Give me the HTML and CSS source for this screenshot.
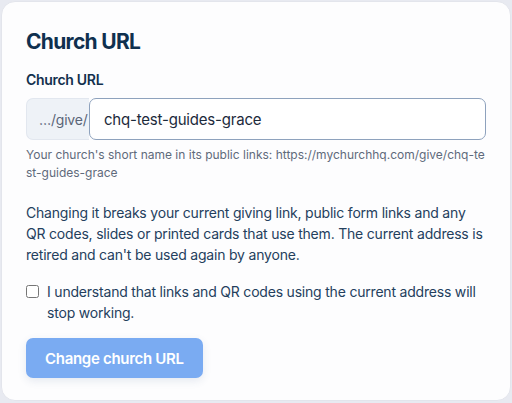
FILE: index.html
```html
<!DOCTYPE html>
<html lang="en">
<head>
<meta charset="utf-8">
<title>Church URL</title>
<link rel="stylesheet" href="styles.css">
</head>
<body>
<section class="card">
  <h2 class="title">Church URL</h2>
  <label class="label" for="slug">Church URL</label>
  <div class="group">
    <span class="prefix">…/give/</span>
    <input id="slug" class="input" type="text" value="chq-test-guides-grace">
  </div>
  <p class="help">Your church's short name in its public links: https://mychurchhq.com/give/chq-test-guides-grace</p>
  <p class="warn">Changing it breaks your current giving link, public form links and any QR codes, slides or printed cards that use them. The current address is retired and can't be used again by anyone.</p>
  <label class="confirm">
    <input type="checkbox" class="check">
    <span>I understand that links and QR codes using the current address will stop working.</span>
  </label>
  <button class="btn" type="button" disabled>Change church URL</button>
</section>
</body>
</html>
```

FILE: styles.css
```css
* { box-sizing: border-box; }
html, body { margin: 0; }
body {
  background: #e8eaf1;
  padding: 1px 1px 0 1px;
  font-family: Inter, "Noto Sans", sans-serif;
  color: #16324f;
}
.card {
  width: 510px;
  height: 400px;
  background: #fdfdfe;
  border: 1px solid #e3e5ec;
  border-radius: 14px;
  padding: 26px 22px 24px 24px;
}
.title {
  margin: 0;
  font-size: 21px;
  line-height: 28px;
  font-weight: 700;
  letter-spacing: -0.7px;
  color: #0f304f;
}
.label {
  display: block;
  margin-top: 14px;
  font-size: 14px;
  line-height: 20px;
  font-weight: 600;
  letter-spacing: -0.3px;
  color: #12304d;
}
.group {
  display: flex;
  margin-top: 8px;
  height: 42px;
}
.prefix {
  display: flex;
  align-items: center;
  flex: none;
  padding: 0 0 0 12px;
  width: 63px;
  background: #eef2f7;
  border: 1px solid #e2e7ef;
  border-right: none;
  border-radius: 7px 0 0 7px;
  color: #5a6577;
  font-size: 14px;
  letter-spacing: -0.2px;
  white-space: nowrap;
}
.input {
  flex: 1;
  min-width: 0;
  margin: 0 2px 0 0;
  border: 1px solid #8ea2bd;
  border-radius: 7px;
  background: #fff;
  padding: 0 14px;
  font-family: inherit;
  font-size: 15px;
  letter-spacing: -0.2px;
  color: #1c2a3b;
  outline: none;
}
.help {
  margin: 6px 0 0 0;
  font-size: 12px;
  line-height: 18px;
  letter-spacing: 0;
  color: #5f6a7b;
  word-break: break-all;
}
.warn {
  margin: 20px 0 0 0;
  font-size: 14px;
  line-height: 21px;
  letter-spacing: -0.2px;
  color: #24405d;
}
.confirm {
  display: flex;
  align-items: flex-start;
  gap: 8px;
  margin-top: 16px;
  font-size: 14px;
  line-height: 21px;
  letter-spacing: -0.2px;
  color: #24405d;
}
.check {
  flex: none;
  margin: 4px 0 0 0;
  width: 13px;
  height: 13px;
}
.btn {
  display: block;
  margin-top: 15px;
  height: 40px;
  padding: 0 19px;
  border: none;
  border-radius: 7px;
  background: #7aabf2;
  color: #fff;
  font-family: inherit;
  font-size: 15px;
  font-weight: 600;
  letter-spacing: -0.3px;
  box-shadow: 0 3px 8px rgba(60, 90, 140, 0.12);
}
```
